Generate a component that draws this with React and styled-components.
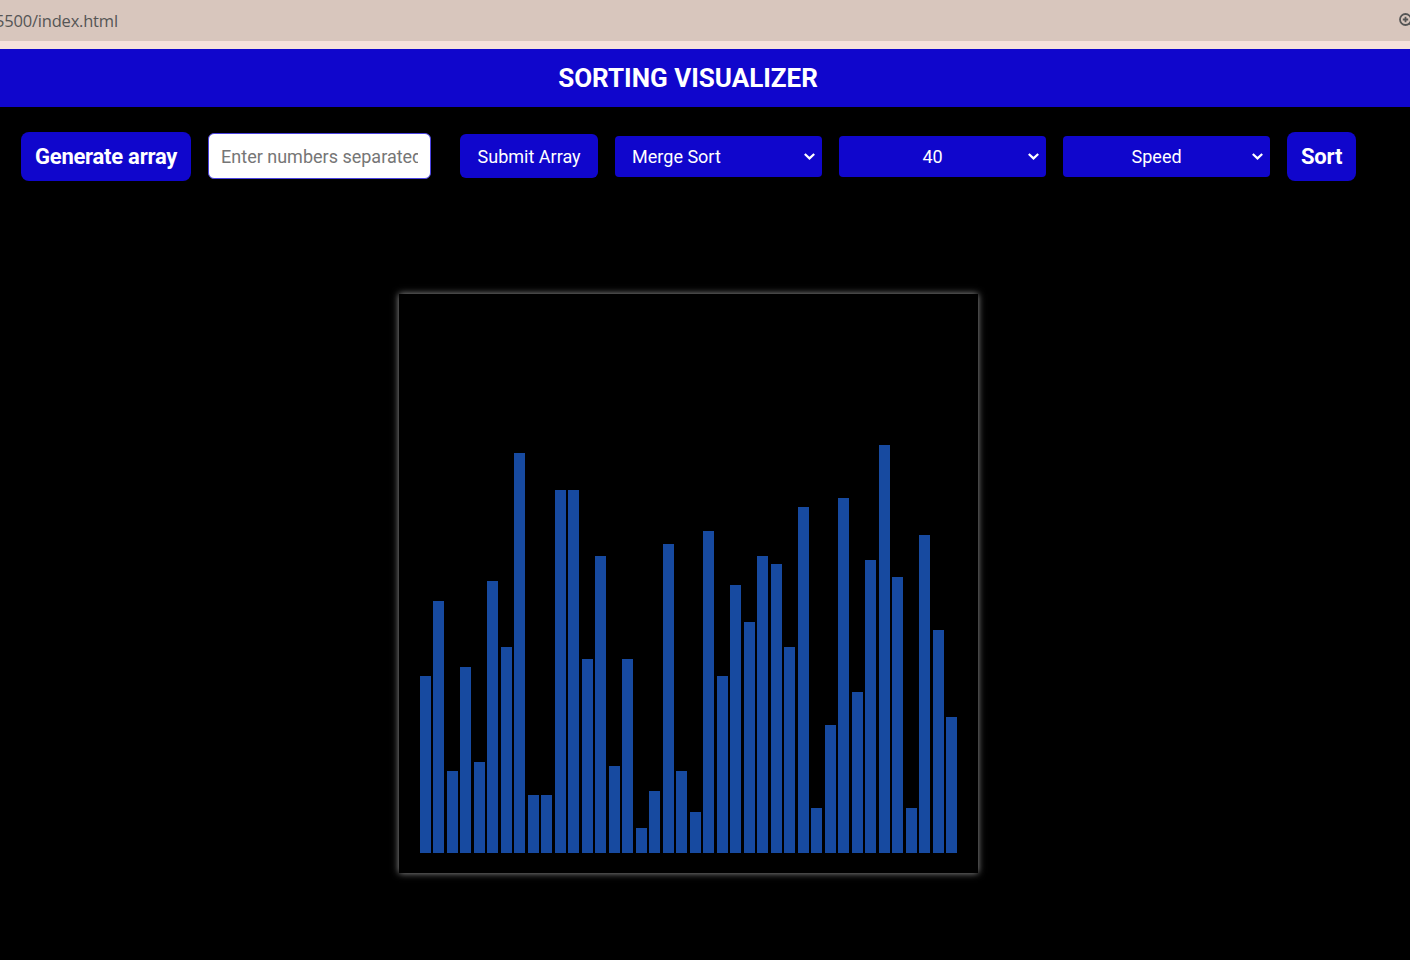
import React, { useState } from 'react'
import styled, { createGlobalStyle } from 'styled-components'

const GlobalStyle = createGlobalStyle`
    * {
        box-sizing: border-box;
    }
    body {
        margin: 0;
        background: #000;
        font-family: Roboto, "Liberation Sans", Arial, sans-serif;
    }
`

const BrowserBar = styled.div`
    height: 49px;
    background: #d8c6bd;
    display: flex;
    align-items: center;
    justify-content: space-between;
    border-bottom: 8px solid #f5e2dc;
    box-shadow: 0 1px 0 #cdb8b0;
`

const Url = styled.span`
    font-family: "Open Sans", Roboto, sans-serif;
    font-size: 16.5px;
    color: #555;
    margin-left: -5px;
    letter-spacing: -0.2px;
`

const ZoomIcon = styled.span`
    display: flex;
    margin-right: -6px;
    color: #555;
`

const Header = styled.header`
    background: #1006cc;
    height: 58px;
    display: flex;
    align-items: center;
    justify-content: center;
    padding-right: 34px;
`

const Title = styled.h1`
    margin: 0;
    color: #fff;
    font-size: 26px;
    font-weight: 700;
    letter-spacing: 0;
`

const Controls = styled.div`
    display: flex;
    align-items: center;
    padding-left: 21px;
    height: 98px;
`

const BigButton = styled.button`
    background: #1006cc;
    color: #fff;
    border: none;
    border-radius: 8px;
    height: 49px;
    padding: 0 14px;
    font-family: Roboto, sans-serif;
    font-size: 22px;
    font-weight: 700;
    letter-spacing: -0.25px;
    margin-right: 17px;
`

const SmallButton = styled.button`
    background: #1006cc;
    color: #fff;
    border: none;
    border-radius: 6px;
    height: 44px;
    width: 138px;
    font-family: Roboto, sans-serif;
    font-size: 18px;
    margin-right: 17px;
`

const NumberInput = styled.input`
    width: 223px;
    height: 46px;
    border: 1px solid #4a42e0;
    border-radius: 6px;
    padding: 0 12px;
    font-family: Roboto, sans-serif;
    font-size: 18px;
    color: #333;
    margin-right: 29px;
    &::placeholder {
        color: #767676;
    }
`

const SelectWrap = styled.div`
    position: relative;
    width: 207px;
    height: 41px;
    margin-right: 17px;
`

const Select = styled.select`
    appearance: none;
    width: 100%;
    height: 100%;
    background: #1006cc;
    color: #fff;
    border: none;
    border-radius: 4px;
    padding: 0 37px 0 17px;
    font-family: Roboto, sans-serif;
    font-size: 18px;
    text-align: ${p => (p.center ? 'center' : 'left')};
    text-align-last: ${p => (p.center ? 'center' : 'left')};
`

const Chevron = styled.svg`
    position: absolute;
    right: 6px;
    top: 15px;
    pointer-events: none;
`

const Stage = styled.div`
    display: flex;
    justify-content: center;
    padding: 89px 34px 60px 0;
`

const Board = styled.div`
    width: 579px;
    height: 579px;
    padding: 20px 19px 20px 20px;
    background: #000;
    box-shadow: 0 0 7px rgba(210, 210, 210, 0.75);
    display: flex;
    align-items: flex-end;
`

const Bar = styled.div`
    flex: 1;
    margin: 0 1.4px;
    background: #174aa0;
`

const heights = [
    177, 252, 82, 186, 91, 272, 206, 400, 58, 58,
    363, 363, 194, 297, 87, 194, 25, 62, 309, 82,
    41, 322, 177, 268, 231, 297, 289, 206, 346, 45,
    128, 355, 161, 293, 408, 276, 45, 318, 223, 136,
]

const DownIcon = () => (
    <Chevron width="13" height="10" viewBox="0 0 13 10">
        <path d="M1.8 3 L6.5 7.4 L11.2 3" fill="none" stroke="#fff" strokeWidth="2.2" />
    </Chevron>
)

const App = () => {
    const [algo, setAlgo] = useState('merge')
    const [size, setSize] = useState('40')
    const [speed, setSpeed] = useState('')

    return (
        <>
            <GlobalStyle />
            <BrowserBar>
                <Url>5500/index.html</Url>
                <ZoomIcon>
                    <svg width="18" height="18" viewBox="0 0 18 18">
                        <circle cx="7.5" cy="7.5" r="5.5" fill="none" stroke="#555" strokeWidth="1.8" />
                        <path d="M7.5 4.8 V10.2 M4.8 7.5 H10.2 M11.5 11.5 L16 16" stroke="#555" strokeWidth="1.8" />
                    </svg>
                </ZoomIcon>
            </BrowserBar>
            <Header>
                <Title>SORTING VISUALIZER</Title>
            </Header>
            <Controls>
                <BigButton>Generate array</BigButton>
                <NumberInput placeholder="Enter numbers separated by commas" />
                <SmallButton>Submit Array</SmallButton>
                <SelectWrap>
                    <Select value={algo} onChange={e => setAlgo(e.target.value)}>
                        <option value="bubble">Bubble Sort</option>
                        <option value="merge">Merge Sort</option>
                        <option value="quick">Quick Sort</option>
                    </Select>
                    <DownIcon />
                </SelectWrap>
                <SelectWrap>
                    <Select center value={size} onChange={e => setSize(e.target.value)}>
                        <option value="20">20</option>
                        <option value="40">40</option>
                        <option value="60">60</option>
                    </Select>
                    <DownIcon />
                </SelectWrap>
                <SelectWrap>
                    <Select center value={speed} onChange={e => setSpeed(e.target.value)}>
                        <option value="">Speed</option>
                        <option value="slow">Slow</option>
                        <option value="fast">Fast</option>
                    </Select>
                    <DownIcon />
                </SelectWrap>
                <BigButton>Sort</BigButton>
            </Controls>
            <Stage>
                <Board>
                    {heights.map((h, i) => (
                        <Bar key={i} style={{ height: h }} />
                    ))}
                </Board>
            </Stage>
        </>
    )
}

export default App
